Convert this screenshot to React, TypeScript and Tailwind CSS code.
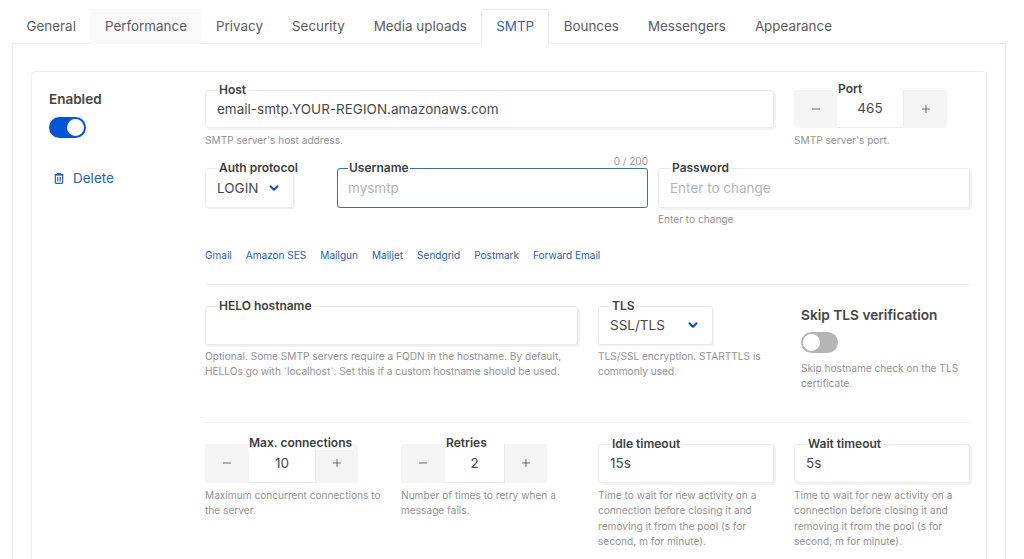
import React from 'react';
import { Minus, Plus, ChevronDown } from 'lucide-react';

const tabs = ['General', 'Performance', 'Privacy', 'Security', 'Media uploads', 'SMTP', 'Bounces', 'Messengers', 'Appearance'];
const providers = ['Gmail', 'Amazon SES', 'Mailgun', 'Mailjet', 'Sendgrid', 'Postmark', 'Forward Email'];

const Help: React.FC<{ children: React.ReactNode; className?: string }> = ({ children, className = '' }) => (
  <p className={`mt-[4px] text-[10.15px] leading-[15.4px] text-[#949494] ${className}`}>{children}</p>
);

const Legend: React.FC<{ text: string; className?: string }> = ({ text, className = '' }) => (
  <span className={`absolute top-[-9px] whitespace-nowrap bg-white px-[1px] text-[12px] font-semibold leading-[15px] text-[#404040] ${className}`}>{text}</span>
);

interface FieldProps {
  label: string;
  value?: string;
  placeholder?: string;
  focused?: boolean;
  className?: string;
  height?: string;
}

const Field: React.FC<FieldProps> = ({ label, value, placeholder, focused, className = '', height = 'h-[39px]' }) => (
  <div
    className={`relative flex items-center rounded-[3px] border bg-white text-[13.5px] ${height} ${
      focused ? 'border-[#3f6f9f] px-[10px]' : 'border-[#eaeaea] px-[11px] shadow-[2px_2px_0_#f3f3f3]'
    } ${className}`}
  >
    <Legend text={label} className={focused ? 'left-[10px]' : 'left-[12px]'} />
    {value ? <span className="text-[#4a4a4a]">{value}</span> : <span className="text-[#b5b5b5]">{placeholder}</span>}
  </div>
);

const Select: React.FC<{ label: string; value: string; className: string; height?: string }> = ({ label, value, className, height = 'h-[39px]' }) => (
  <div className={`relative flex items-center justify-between rounded-[3px] border border-[#eaeaea] bg-white pl-[11px] pr-[12px] text-[13.5px] text-[#4a4a4a] shadow-[1px_1px_0_#f3f3f3] ${height} ${className}`}>
    <Legend text={label} className="left-[12px]" />
    <span>{value}</span>
    <ChevronDown size={14} strokeWidth={3.5} className="text-[#0a4fb0]" />
  </div>
);

const Stepper: React.FC<{ label: string; value: string; width: string; side: string; input: string; labelPos: string }> = ({ label, value, width, side, input, labelPos }) => (
  <div className={`relative flex h-[39px] rounded-[3px] bg-[#f5f5f5] text-[#5a5a5a] ${width}`}>
    <div className={`flex items-center justify-center ${side}`}>
      <Minus size={12} strokeWidth={1.75} />
    </div>
    <div className={`flex items-center justify-center border-r border-b border-[#eaeaea] bg-white text-[13.5px] text-[#4a4a4a] ${input}`}>{value}</div>
    <div className="flex flex-1 items-center justify-center">
      <Plus size={12} strokeWidth={1.75} />
    </div>
    <Legend text={label} className={`bg-transparent ${labelPos}`} />
  </div>
);

const Toggle: React.FC<{ on?: boolean }> = ({ on }) => (
  <div className={`flex h-[21px] w-[37px] items-center rounded-full px-[2px] ${on ? 'justify-end bg-[#0055d4]' : 'justify-start bg-[#b5b5b5]'}`}>
    <div className="h-[17px] w-[17px] rounded-full bg-white" />
  </div>
);

const TrashIcon = () => (
  <svg width="10" height="11" viewBox="0 0 10 11" fill="none" stroke="#2a62ad" strokeWidth="1.2">
    <path d="M0.5 1.6h9M3.5 1.6V0.6h3v1" />
    <rect x="1.3" y="2" width="7.4" height="8.4" rx="0.8" />
    <path d="M3.8 4v4.4M6.2 4v4.4" />
  </svg>
);

export default function App() {
  return (
    <div className="h-[559px] w-[1024px] overflow-hidden bg-white font-['Inter',sans-serif]">
      <div className="ml-[12px] mr-[18px] mt-[9px]">
        <nav className="flex h-[35px] border-b border-[#ebebeb] text-[13.42px]">
          {tabs.map((tab) => (
            <div
              key={tab}
              className={`flex h-[35px] items-center px-[14.5px] ${
                tab === 'SMTP'
                  ? 'rounded-t-[3px] border border-[#ebebeb] border-b-white bg-white px-[14px] text-[#3268a8]'
                  : tab === 'Performance'
                    ? 'bg-[#f9f9f9] text-[#5c5c5c]'
                    : 'text-[#5c5c5c]'
              }`}
            >
              {tab}
            </div>
          ))}
        </nav>

        <section className="h-[600px] border-x border-[#ebebeb] px-[18px] pt-[27px]">
          <div className="flex h-[560px] rounded-[4px] border border-[#efefef] pl-[17px] pt-[18px]">
            <aside className="w-[156px] shrink-0">
              <div className="text-[13.5px] font-semibold leading-[18px] text-[#454545]">Enabled</div>
              <div className="mt-[9px]">
                <Toggle on />
              </div>
              <a className="ml-[5px] mt-[31px] flex items-center gap-[9px] text-[13.5px] leading-[18px] text-[#2a62ad]">
                <TrashIcon />
                Delete
              </a>
            </aside>

            <div className="w-[765px]">
              <div className="flex gap-[20px]">
                <div className="w-[569px]">
                  <Field label="Host" value="email-smtp.YOUR-REGION.amazonaws.com" height="h-[38px]" />
                  <Help className="mt-[5px]">SMTP server's host address.</Help>
                </div>
                <div className="w-[153px]">
                  <Stepper label="Port" value="465" width="w-[153px] !h-[38px]" side="w-[43px]" input="w-[67px]" labelPos="left-[43px]" />
                  <Help className="mt-[5px]">SMTP server's port.</Help>
                </div>
              </div>

              <div className="mt-[20px] flex">
                <Select label="Auth protocol" value="LOGIN" className="w-[89px]" height="h-[40px]" />
                <div className="relative ml-[43px] w-[311px]">
                  <span className="absolute right-0 top-[-13px] text-[10px] leading-[13px] text-[#9a9a9a]">0 / 200</span>
                  <Field label="Username" placeholder="mysmtp" focused height="h-[40px]" />
                </div>
                <div className="ml-[10px] w-[312px]">
                  <Field label="Password" placeholder="Enter to change" height="h-[40px]" />
                  <Help>Enter to change</Help>
                </div>
              </div>

              <div className="mt-[20px] flex gap-[14px] text-[10.05px] leading-[15px] text-[#2a62ad]">
                {providers.map((p) => (
                  <a key={p}>{p}</a>
                ))}
              </div>

              <hr className="mb-[21px] mt-[21px] border-[#eeeeee]" />

              <div className="flex h-[116px]">
                <div className="w-[373px]">
                  <Field label="HELO hostname" />
                  <Help>Optional. Some SMTP servers require a FQDN in the hostname. By default, HELLOs go with `localhost`. Set this if a custom hostname should be used.</Help>
                </div>
                <div className="ml-[20px] w-[176px]">
                  <Select label="TLS" value="SSL/TLS" className="w-[115px]" />
                  <Help>TLS/SSL encryption. STARTTLS is commonly used.</Help>
                </div>
                <div className="ml-[27px] w-[169px]">
                  <div className="text-[13.7px] font-semibold leading-[18px] text-[#454545]">Skip TLS verification</div>
                  <div className="mt-[8px]">
                    <Toggle />
                  </div>
                  <Help className="mt-[8px]">Skip hostname check on the TLS certificate.</Help>
                </div>
              </div>

              <hr className="mb-[21px] border-[#eeeeee]" />

              <div className="flex">
                <div className="w-[180px]">
                  <Stepper label="Max. connections" value="10" width="w-[153px]" side="w-[44px]" input="w-[67px]" labelPos="left-[43px]" />
                  <Help className="mt-[5px]">Maximum concurrent connections to the server.</Help>
                </div>
                <div className="ml-[16px] w-[165px]">
                  <Stepper label="Retries" value="2" width="w-[146px]" side="w-[44px]" input="w-[60px]" labelPos="left-[44px]" />
                  <Help className="mt-[5px]">Number of times to retry when a message fails.</Help>
                </div>
                <div className="ml-[32px] w-[176px]">
                  <Field label="Idle timeout" value="15s" />
                  <Help className="mt-[5px]">Time to wait for new activity on a connection before closing it and removing it from the pool (s for second, m for minute).</Help>
                </div>
                <div className="ml-[20px] w-[176px]">
                  <Field label="Wait timeout" value="5s" />
                  <Help className="mt-[5px]">Time to wait for new activity on a connection before closing it and removing it from the pool (s for second, m for minute).</Help>
                </div>
              </div>
            </div>
          </div>
        </section>
      </div>
    </div>
  );
}
